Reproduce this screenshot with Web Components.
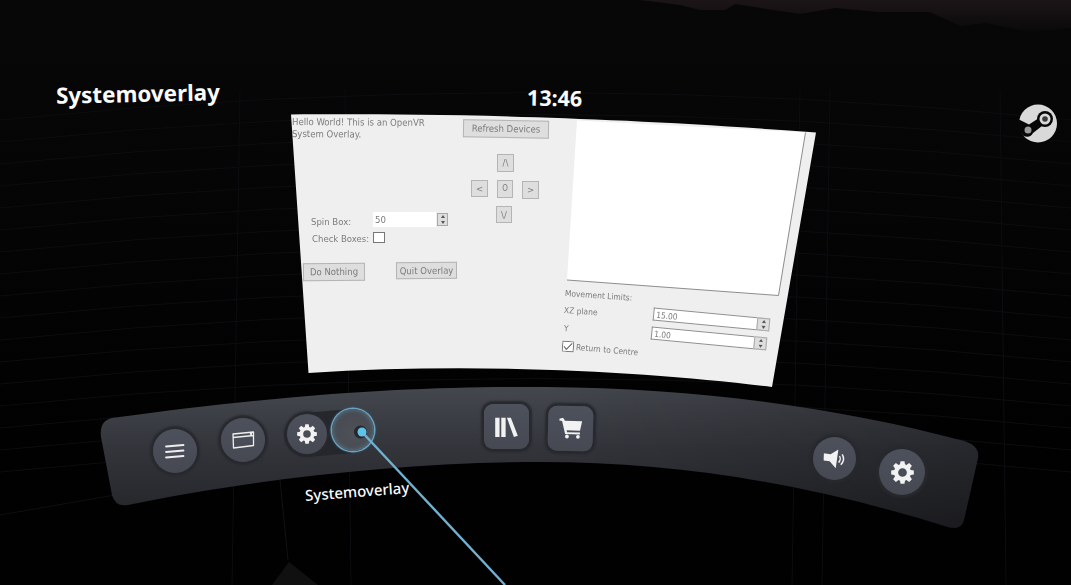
<!DOCTYPE html>
<html>
<head>
<meta charset="utf-8">
<title>Systemoverlay</title>
<style>
  html, body { margin: 0; height: 100%; background: #000; overflow: hidden; }
</style>
</head>
<body>
<vr-scene>
  <vr-text slot="hud" size="22.400" weight="700" style="left:56px;top:79px;transform:rotate(-1.2deg)">Systemoverlay</vr-text>
  <vr-text slot="hud" size="21.500" weight="700" style="left:527px;top:84px;transform:rotate(1deg)">13:46</vr-text>
  <steam-logo slot="hud"></steam-logo>

  <vr-overlay slot="hud">
    <qt-label style="left:292px;top:116px;width:150px;transform:rotate(.4deg)">Hello World! This is an OpenVR<br>System Overlay.</qt-label>
    <qt-button style="left:463px;top:120px;width:86px;height:18px;transform:rotate(1deg)">Refresh Devices</qt-button>
    <qt-button style="left:497px;top:154px;width:17px;height:18px">/\</qt-button>
    <qt-button style="left:471px;top:180px;width:17px;height:17px">&lt;</qt-button>
    <qt-button style="left:497px;top:180px;width:16px;height:18px;font-size:8px">O</qt-button>
    <qt-button style="left:522px;top:181px;width:17px;height:18px">&gt;</qt-button>
    <qt-button style="left:496px;top:206px;width:16px;height:17px">\/</qt-button>
    <qt-label style="left:311px;top:216px">Spin Box:</qt-label>
    <qt-label style="left:312px;top:233px">Check Boxes:</qt-label>
    <qt-spin style="left:373px;top:212px;width:75px;height:15px">50</qt-spin>
    <qt-check style="left:373px;top:232px"></qt-check>
    <qt-button style="left:303px;top:263px;width:62px;height:18px;transform:rotate(-.5deg)">Do Nothing</qt-button>
    <qt-button style="left:396px;top:262px;width:61px;height:17px;transform:rotate(-.5deg)">Quit Overlay</qt-button>

    <vr-canvas></vr-canvas>

    <qt-label small style="left:565px;top:287px;transform:rotate(4deg)">Movement Limits:</qt-label>
    <qt-label small style="left:564px;top:304px;transform:rotate(4deg)">XZ plane</qt-label>
    <qt-label small style="left:564px;top:322px;transform:rotate(4deg)">Y</qt-label>
    <qt-spin field style="left:653px;top:312.500px;width:117px;height:13px;transform:rotate(5.4deg)">15.00</qt-spin>
    <qt-spin field style="left:651px;top:332px;width:116px;height:13px;transform:rotate(5.4deg)">1.00</qt-spin>
    <qt-check checked style="left:562px;top:341px;transform:rotate(4deg)"></qt-check>
    <qt-label small style="left:576px;top:341px;transform:rotate(5deg)">Return to Centre</qt-label>
  </vr-overlay>

  <vr-dock slot="hud">
    <dock-button style="left:153px;top:429px;--d:44px">
      <svg width="22" height="22" viewBox="0 0 22 22" fill="none" stroke="#eee" stroke-width="1.800" stroke-linecap="round"><path d="M2 6.500 19.500 5M2 12 19.500 10.500M2 17.500 19.500 16"/></svg>
    </dock-button>
    <dock-button style="left:221px;top:418px;--d:44px">
      <svg width="24" height="20" viewBox="0 0 24 20" fill="none" stroke="#eee" stroke-width="1.300" stroke-linejoin="round"><path d="M2 4 22.500 2V15.500L2.500 18ZM2 7.500 22.500 5.500"/><circle cx="20" cy="3.800" r=".6" fill="#eee"/></svg>
    </dock-button>
    <dock-track></dock-track>
    <dock-button style="left:287px;top:414px;--d:40px" gear="20"></dock-button>
    <dock-button active style="left:332px;top:409px;--d:42px"></dock-button>
    <dock-button square style="left:484px;top:404px;--d:45px">
      <svg width="23" height="20" viewBox="0 0 26 23" fill="#f2f2f2"><path d="M0 1H5V23H0ZM7 1H12V23H7ZM13.500 1H18L26 21.500 21.500 23Z"/></svg>
    </dock-button>
    <dock-button square style="left:548px;top:406px;--d:45px;transform:rotate(1.500deg)">
      <svg width="23" height="21" viewBox="0 0 24 22" fill="#f2f2f2"><path d="M0 1 4 0 6 3H24L22 13H8L8.500 15H22V17H6.500L3 3.500 0 3Z"/><circle cx="8.500" cy="19.500" r="2"/><circle cx="20" cy="19.500" r="2"/></svg>
    </dock-button>
    <dock-button style="left:813px;top:437px;--d:43px">
      <svg width="24" height="20" viewBox="0 0 24 20" fill="#f2f2f2" style="transform:rotate(8deg)"><path d="M0 6 7 6 14 0V19L7 13H1Z"/><path d="M16 6.500C17.500 8 17.500 11 16 13M18.500 4.500C21 7.500 21 11.500 18.500 15" fill="none" stroke="#f2f2f2" stroke-width="1.500"/></svg>
    </dock-button>
    <dock-button style="left:879px;top:449px;--d:46px" gear="23"></dock-button>
  </vr-dock>

  <vr-text slot="hud" size="15" weight="500" style="left:305px;top:482px;transform:rotate(-4.500deg)">Systemoverlay</vr-text>
  <vr-laser slot="hud"></vr-laser>
</vr-scene>

<script>
// 齿轮路径，几个按钮共用
function gearPath(size) {
    const c = size / 2, outer = size / 2, inner = size * 0.37;
    let d = '';
    for (let i = 0; i < 8; i++) {
        const a = i * Math.PI / 4;
        const pts = [[inner, -0.3], [outer, -0.17], [outer, 0.17], [inner, 0.3]];
        pts.forEach(([r, o], j) => {
            const x = (c + r * Math.cos(a + o)).toFixed(2);
            const y = (c + r * Math.sin(a + o)).toFixed(2);
            d += (i === 0 && j === 0 ? 'M' : 'L') + x + ' ' + y;
        });
    }
    return d + 'Z';
}

// 所有元素共用的小工具
class ShadowElement extends HTMLElement {
    constructor() {
        super();
        this.attachShadow({ mode: 'open' });
    }
    set html(value) {
        this.shadowRoot.innerHTML = value;
    }
}

// 背景：黑色空间，淡网格，山影
class VrScene extends ShadowElement {
    connectedCallback() {
        let grid = '';
        for (let i = 0; i < 17; i++) {
            const y = 90 + i * 22;
            grid += `<path d="M0 ${y + 30}Q535 ${y - 25} 1071 ${y + 30}"/>`;
        }
        [240, 345, 800, 1000, 830].forEach((x, i) => {
            grid += `<path d="M${x} 90L${x + (i % 2 ? 6 : -8)} 585"/>`;
        });
        this.html = `
            <style>
                :host { display: block; position: relative; width: 1071px; height: 585px; overflow: hidden;
                    background: linear-gradient(#070708, #050506 30%, #010101 75%); }
                svg { position: absolute; left: 0; top: 0; }
            </style>
            <svg width="1071" height="585" viewBox="0 0 1071 585">
                <defs>
                    <linearGradient id="sky" x1="0" y1="0" x2="0" y2="1">
                        <stop offset="0" stop-color="#1c1517"/><stop offset="1" stop-color="#0a090a"/>
                    </linearGradient>
                </defs>
                <path d="M640 0H1071V28L1030 32 985 23 960 26 930 12 880 12 835 8 800 14 735 4 725 10 700 10 680 5 665 3Z" fill="url(#sky)"/>
                <g fill="none" stroke="#0c0d10" stroke-width="1">${grid}</g>
                <path d="M272 585 289 562 318 585Z" fill="#101011"/>
                <path d="M280 480 288 560" stroke="#121214" fill="none"/>
                <path d="M0 515 115 495" stroke="#0f0f12" fill="none"/>
            </svg>
            <slot name="hud"></slot>`;
    }
}

// 浮在场景里的白色文字
class VrText extends ShadowElement {
    connectedCallback() {
        const size = this.getAttribute('size') || 16;
        const weight = this.getAttribute('weight') || 400;
        this.html = `
            <style>
                :host { display: block; position: absolute; white-space: nowrap; color: #fbfbfb;
                    font: ${weight} ${size}px/1.3 "Noto Sans", "Open Sans", sans-serif; }
            </style><slot></slot>`;
    }
}

class SteamLogo extends ShadowElement {
    connectedCallback() {
        this.html = `
            <style>:host { display: block; position: absolute; left: 1018px; top: 104px; line-height: 0; }</style>
            <svg width="40" height="39" viewBox="0 0 40 39">
                <circle cx="20" cy="19.500" r="19" fill="#d9d9d9"/>
                <path fill="#070708" d="M-1 14.500 11 20.500 21 14 24 22 15 29 A6.500 6.500 0 0 1 3.500 29.500L-1 24.500Z"/>
                <circle cx="27" cy="15" r="8" fill="#070708"/>
                <circle cx="27" cy="15" r="5.500" fill="#d9d9d9"/>
                <circle cx="27" cy="15" r="2.800" fill="#3a3a3b"/>
                <circle cx="10" cy="26" r="3.500" fill="#9a9a9a"/>
            </svg>`;
    }
}

// 弯曲的覆盖层窗口，子元素用场景坐标定位
class VrOverlay extends ShadowElement {
    connectedCallback() {
        this.html = `
            <style>
                :host { display: block; position: absolute; left: 0; top: 0; width: 1071px; height: 585px;
                    background: #efefef; filter: blur(.4px);
                    clip-path: path("M291 114.500C400 114 570 114 816 132.500L772 387C650 372 480 362 308.500 373Z");
                    color: #7c7c7c; font: 9.500px/12px "DejaVu Sans Condensed", "DejaVu Sans", sans-serif; }
            </style><slot></slot>`;
    }
}

class VrCanvas extends ShadowElement {
    connectedCallback() {
        this.html = `
            <style>:host { display: block; position: absolute; left: 0; top: 0; line-height: 0; }</style>
            <svg width="1071" height="585" viewBox="0 0 1071 585">
                <path d="M577 120.500 805.500 132.500 778.500 295.500 567 280Z" fill="#fff"/>
                <path d="M805.500 132.500 778.500 295.500 567 280" fill="none" stroke="#8d8d8d"/>
            </svg>`;
    }
}

class QtLabel extends ShadowElement {
    connectedCallback() {
        this.html = `
            <style>
                :host { display: block; position: absolute; white-space: nowrap; transform-origin: 0 50%; }
                :host([small]) { font-size: 8.400px; }
            </style>
            <slot></slot>`;
    }
}

class QtButton extends ShadowElement {
    connectedCallback() {
        this.html = `
            <style>
                :host { display: flex; position: absolute; box-sizing: border-box; align-items: center; justify-content: center;
                    background: #dedede; border: 1px solid #b4b4b4; white-space: nowrap; }
            </style><slot></slot>`;
    }
}

class QtSpin extends ShadowElement {
    connectedCallback() {
        const field = this.hasAttribute('field');
        this.html = `
            <style>
                :host { display: flex; position: absolute; box-sizing: border-box; }
                .edit { flex: 1; min-width: 0; display: flex; align-items: center; padding-left: 2px; background: #fff;
                    ${field ? 'border: 1px solid #8f8f8f; border-right: 0; font-size: 8.400px;' : ''} }
                .arrows { width: ${field ? 13 : 11}px; ${field ? '' : 'margin: 1px 0 1px 1px;'} display: grid; grid-template-rows: 1fr 1fr; background: #dedede; border: 1px solid #a9a9a9; box-sizing: border-box; }
                .arrows i { display: flex; align-items: center; justify-content: center; }
                .arrows i::after { content: ""; border: 2px solid transparent; }
                .arrows i:first-child::after { border-bottom: 3px solid #555; border-top: 0; }
                .arrows i:last-child::after { border-top: 3px solid #555; border-bottom: 0; }
            </style>
            <div class="edit"><slot></slot></div>
            <div class="arrows"><i></i><i></i></div>`;
    }
}

class QtCheck extends ShadowElement {
    connectedCallback() {
        const mark = this.hasAttribute('checked')
            ? '<path d="M2 5.500 4.500 8.500 10 2" fill="none" stroke="#666" stroke-width="1.100"/>' : '';
        this.html = `
            <style>:host { display: block; position: absolute; width: 12px; height: 11px; line-height: 0; }</style>
            <svg width="12" height="11" viewBox="0 0 12 11">
                <rect x=".5" y=".5" width="11" height="10" fill="#fff" stroke="#777"/>${mark}
            </svg>`;
    }
}

// 弧形工具条
class VrDock extends ShadowElement {
    connectedCallback() {
        this.html = `
            <style>
                :host { display: block; position: absolute; left: 0; top: 0; width: 1071px; height: 585px; }
                svg { position: absolute; left: 0; top: 0; }
            </style>
            <svg width="1071" height="585" viewBox="0 0 1071 585">
                <defs>
                    <linearGradient id="bar" x1="0" y1="0" x2="0" y2="1">
                        <stop offset="0" stop-color="#44474e"/><stop offset=".45" stop-color="#32343a"/><stop offset="1" stop-color="#222327"/>
                    </linearGradient>
                    <linearGradient id="barRight" x1="0" y1="0" x2="1" y2="0">
                        <stop offset="0" stop-color="#000" stop-opacity="0"/><stop offset="1" stop-color="#000" stop-opacity=".25"/>
                    </linearGradient>
                </defs>
                <path fill="url(#bar)" d="M112 418C300 392 430 386 545 387 700 388 840 408 964 441Q980 446 978 458L964 520Q961 531 948 527C810 484 680 462 540 462 400 462 250 480 128 505Q115 507 112 495L101 437Q99 421 112 418Z"/>
                <path fill="url(#barRight)" d="M545 387C700 388 840 408 964 441Q980 446 978 458L964 520Q961 531 948 527C810 484 680 462 540 462Z"/>
            </svg>
            <slot></slot>`;
    }
}

// 悬停时齿轮和当前按钮之间的深色底
class DockTrack extends HTMLElement {
    constructor() {
        super();
        this.attachShadow({ mode: 'open' }).innerHTML = `
            <style>
                :host { display: block; position: absolute; left: 284px; top: 411px; width: 90px; height: 44px;
                    border-radius: 22px; background: #25272c; transform: rotate(-5deg); }
            </style>`;
    }
}

// 工具条上的圆形/方形按钮
class DockButton extends ShadowElement {
    connectedCallback() {
        const square = this.hasAttribute('square');
        const active = this.hasAttribute('active');
        const gear = this.getAttribute('gear');
        const icon = gear
            ? `<svg width="${gear}" height="${gear}" viewBox="0 0 ${gear} ${gear}"><path fill="#f2f2f2" fill-rule="evenodd" d="${gearPath(+gear)}M${gear / 2 + gear * 0.19} ${gear / 2}a${gear * 0.19} ${gear * 0.19} 0 1 0 ${-gear * 0.38} 0a${gear * 0.19} ${gear * 0.19} 0 1 0 ${gear * 0.38} 0Z"/></svg>`
            : '<slot></slot>';
        this.html = `
            <style>
                :host { display: flex; position: absolute; box-sizing: border-box; width: var(--d); height: var(--d);
                    align-items: center; justify-content: center; border-radius: ${square ? '9px' : '50%'};
                    background: linear-gradient(#4d515c, #464952);
                    box-shadow: 0 0 2px 3px #27292e; }
                :host([active]) { background: radial-gradient(circle at 50% 60%, #4f5159, #44474e);
                    box-shadow: 0 0 0 1.500px #6aa3bf, 0 0 3px 1px #3f6a80, inset 0 0 5px #5b8598; }
            </style>${active ? '' : icon}`;
    }
}

// 手柄射线
class VrLaser extends ShadowElement {
    connectedCallback() {
        this.html = `
            <style>:host { display: block; position: absolute; left: 0; top: 0; line-height: 0; }</style>
            <svg width="1071" height="585" viewBox="0 0 1071 585">
                <circle cx="360.500" cy="432" r="6.500" fill="#25272c"/>
                <path d="M362 432 505 585" stroke="#72b0cf" stroke-width="2.400"/>
                <circle cx="362" cy="432" r="4.500" fill="#5fc2e8"/>
            </svg>`;
    }
}

customElements.define('vr-scene', VrScene);
customElements.define('vr-text', VrText);
customElements.define('steam-logo', SteamLogo);
customElements.define('vr-overlay', VrOverlay);
customElements.define('vr-canvas', VrCanvas);
customElements.define('qt-label', QtLabel);
customElements.define('qt-button', QtButton);
customElements.define('qt-spin', QtSpin);
customElements.define('qt-check', QtCheck);
customElements.define('vr-dock', VrDock);
customElements.define('dock-track', DockTrack);
customElements.define('dock-button', DockButton);
customElements.define('vr-laser', VrLaser);
</script>
</body>
</html>
